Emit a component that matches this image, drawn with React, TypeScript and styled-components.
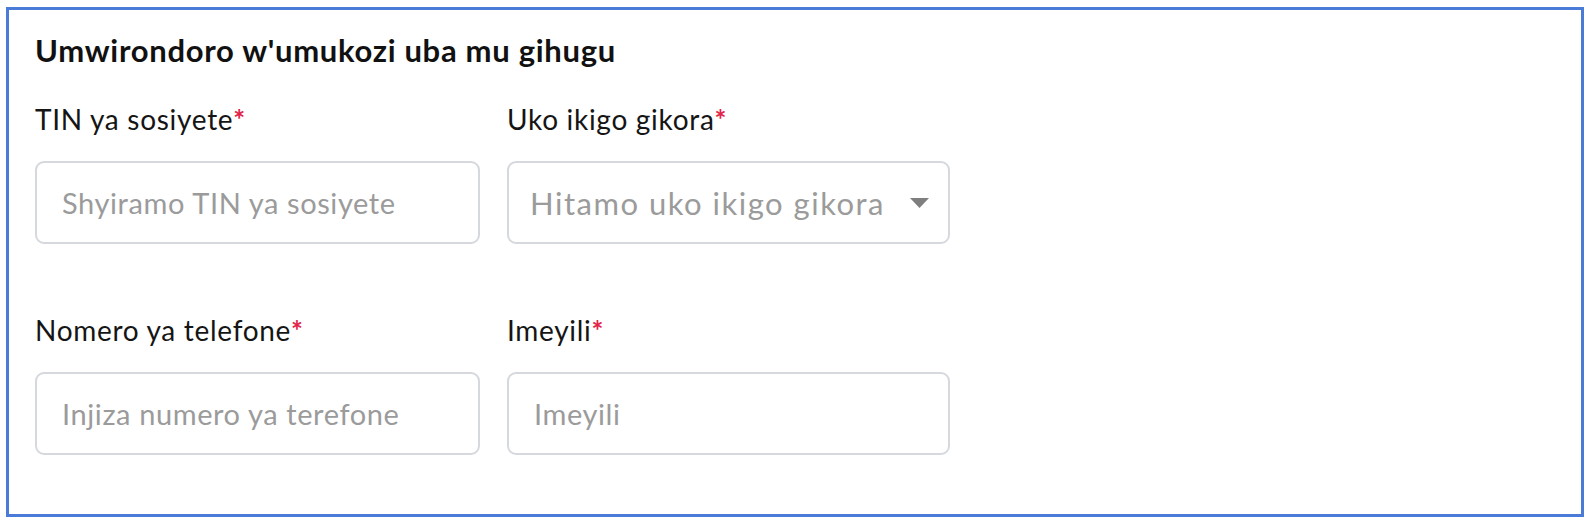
import React from "react";
import styled, { createGlobalStyle } from "styled-components";

const Global = createGlobalStyle`
  html, body { margin: 0; padding: 0; background: #ffffff; }
  body { font-family: Lato, "Noto Sans", "Liberation Sans", sans-serif; }
  * { box-sizing: border-box; }
`;

const Page = styled.div`
  width: 1594px;
  height: 526px;
  padding: 7px 10px 9px 6px;
`;

const Card = styled.section`
  height: 510px;
  border: 3px solid #4a7bd8;
  padding: 22px 26px 0 26px;
  background: #ffffff;
`;

const Title = styled.h2`
  margin: 0;
  font-size: 31px;
  line-height: 36px;
  letter-spacing: 0.7px;
  font-weight: 700;
  color: #111111;
`;

const Grid = styled.div`
  display: grid;
  grid-template-columns: 445px 443px;
  column-gap: 27px;
  row-gap: 69px;
  margin-top: 34px;
`;

const Field = styled.div`
  display: flex;
  flex-direction: column;
  gap: 24px;
`;

const Label = styled.label`
  font-size: 28px;
  line-height: 35px;
  letter-spacing: 0.7px;
  color: #151515;
`;

const Star = styled.span`
  color: #e3244a;
  font-weight: 700;
`;

const Box = styled.div<{ $pad?: number }>`
  height: 83px;
  border: 2px solid #d5d8dd;
  border-radius: 9px;
  display: flex;
  align-items: center;
  padding: 0 19px 0 ${(p) => p.$pad ?? 25}px;
  background: #ffffff;
`;

const Input = styled.input`
  border: none;
  outline: none;
  width: 100%;
  padding: 0;
  font-family: inherit;
  font-size: 29px;
  letter-spacing: 0.6px;
  color: #333;
  background: transparent;
  &::placeholder { color: #9b9b9b; }
`;

const SelectText = styled.span`
  flex: 1;
  font-size: 31px;
  letter-spacing: 1.5px;
  color: #9b9b9b;
  white-space: nowrap;
`;

const Caret = styled.svg`
  width: 19px;
  height: 10px;
  flex: none;
  margin-left: 12px;
`;

export default function App() {
  return (
    <>
      <Global />
      <Page>
        <Card>
          <Title>Umwirondoro w'umukozi uba mu gihugu</Title>
          <Grid>
            <Field>
              <Label>TIN ya sosiyete<Star>*</Star></Label>
              <Box>
                <Input placeholder="Shyiramo TIN ya sosiyete" />
              </Box>
            </Field>
            <Field>
              <Label>Uko ikigo gikora<Star>*</Star></Label>
              <Box $pad={21}>
                <SelectText>Hitamo uko ikigo gikora</SelectText>
                <Caret viewBox="0 0 19 10">
                  <path d="M0 0 L19 0 L9.5 10 Z" fill="#7f7f7f" />
                </Caret>
              </Box>
            </Field>
            <Field>
              <Label>Nomero ya telefone<Star>*</Star></Label>
              <Box>
                <Input placeholder="Injiza numero ya terefone" />
              </Box>
            </Field>
            <Field>
              <Label>Imeyili<Star>*</Star></Label>
              <Box>
                <Input placeholder="Imeyili" />
              </Box>
            </Field>
          </Grid>
        </Card>
      </Page>
    </>
  );
}
